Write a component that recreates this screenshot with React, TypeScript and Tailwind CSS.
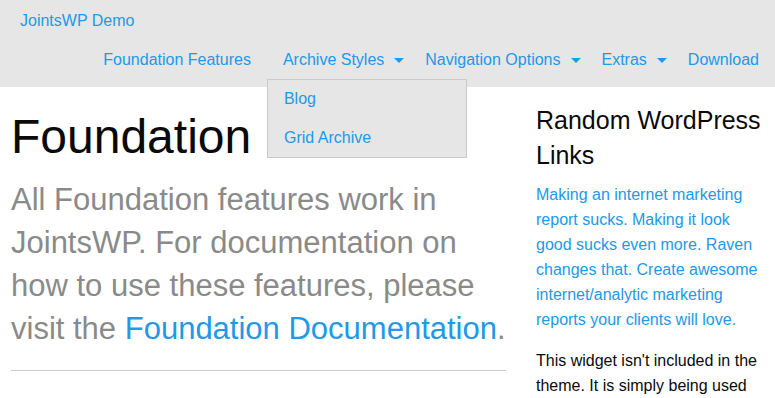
import React from "react";

const navItems = [
  { label: "Foundation Features", dropdown: false },
  { label: "Archive Styles", dropdown: true },
  { label: "Navigation Options", dropdown: true },
  { label: "Extras", dropdown: true },
  { label: "Download", dropdown: false },
];

function Caret() {
  return <span className="ml-[10px] mr-[5px] inline-block w-0 h-0 border-x-[5px] border-t-[5px] border-x-transparent border-t-[#2199e8]" />;
}

export default function App() {
  return (
    <div className="h-[398px] overflow-hidden bg-white text-[#0a0a0a] font-['Liberation_Sans',Arial,sans-serif]">
      {/* top bar */}
      <header className="bg-[#e6e6e6] pb-[8px] relative z-10">
        <div className="h-[41px] flex items-center pl-5">
          <a className="text-[16px] text-[#2199e8]">JointsWP Demo</a>
        </div>
        <ul className="flex justify-end h-[38px]">
          {navItems.map((item) => (
            <li key={item.label} className="relative flex items-center">
              <a className={`flex items-center h-[38px] pl-4 text-[16px] leading-none text-[#2199e8] ${item.dropdown ? "" : "pr-4"}`}>
                {item.label}
                {item.dropdown && <Caret />}
              </a>
              {item.label === "Archive Styles" && (
                <ul className="absolute top-full left-0 w-[200px] border border-[#cacaca] bg-[#e6e6e6]">
                  <li className="h-[38.4px] flex items-center px-4 text-[16px] leading-none text-[#2199e8]">Blog</li>
                  <li className="h-[38.4px] flex items-center px-4 text-[16px] leading-none text-[#2199e8]">Grid Archive</li>
                </ul>
              )}
            </li>
          ))}
        </ul>
      </header>

      <div className="flex">
        {/* main column */}
        <main className="w-[521px] shrink-0 pl-[11px] pr-[15px] pt-4">
          <h1 className="text-[48px] leading-[1.4] font-normal mb-2">Foundation</h1>
          <p className="text-[31px] leading-[43px] text-[#8a8a8a] whitespace-nowrap">
            All Foundation features work in
            <br />
            JointsWP. For documentation on
            <br />
            how to use these features, please
            <br />
            visit the <a className="text-[#2199e8]">Foundation Documentation</a>.
          </p>
          <hr className="mt-5 border-0 border-t border-[#cacaca]" />
        </main>

        {/* sidebar */}
        <aside className="flex-1 pl-[15px] pr-[13px] pt-4">
          <h4 className="text-[25px] leading-[35px] font-normal mb-[9px]">Random WordPress Links</h4>
          <p className="text-[16px] leading-[25px] text-[#2199e8] mb-4">
            Making an internet marketing report sucks. Making it look good sucks even more. Raven changes that. Create awesome internet/analytic marketing reports your clients will love.
          </p>
          <p className="text-[16px] leading-[25px]">
            This widget isn't included in the theme. It is simply being used to show what a sidebar widget looks like in JointsWP.
          </p>
        </aside>
      </div>
    </div>
  );
}
